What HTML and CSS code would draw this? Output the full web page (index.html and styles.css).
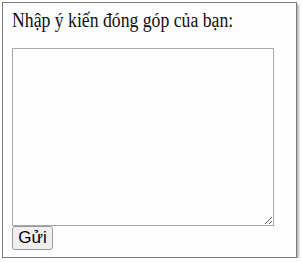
FILE: index.html
```html
<!DOCTYPE html>
<html lang="vi">
<head>
<meta charset="utf-8">
<link rel="stylesheet" href="styles.css">
</head>
<body>
<form class="box">
  <div class="prompt-row"><label class="prompt" for="fb">Nhập ý kiến đóng góp của bạn:</label></div>
  <textarea id="fb" class="field"></textarea>
  <button type="button" class="send">Gửi</button>
</form>
</body>
</html>
```
FILE: styles.css
```css
html, body {
  margin: 0;
  padding: 0;
  background: #ffffff;
}
.box {
  box-sizing: border-box;
  width: 295px;
  height: 256px;
  margin: 2px 0 0 2px;
  padding: 6px 9px 7px 9px;
  border: 1px solid #7d7d7d;
  background: #fdfdfd;
  box-shadow: 2px 2px 2px #b8b8b8;
}
.prompt-row {
  height: 23px;
  margin-bottom: 16px;
}
.prompt {
  display: inline-block;
  font-family: "Liberation Serif", "Times New Roman", serif;
  font-size: 20px;
  line-height: 23px;
  color: #111;
  white-space: nowrap;
  transform: scaleX(0.885);
  transform-origin: left center;
}
.field {
  display: block;
  box-sizing: border-box;
  width: 262px;
  height: 178px;
  margin: 0;
  padding: 2px;
  border: 1px solid #a9a9a9;
  background: #fdfdfd;
  font-family: "Liberation Mono", monospace;
  font-size: 13px;
}
.send {
  display: block;
  box-sizing: border-box;
  width: 41px;
  height: 24px;
  margin: 0;
  padding: 0 4px;
  font-family: "Liberation Sans", Arial, sans-serif;
  font-size: 17px;
  color: #000;
  background: #efefef;
  border: 1px solid #9a9a9a;
  border-radius: 3px;
}
```
